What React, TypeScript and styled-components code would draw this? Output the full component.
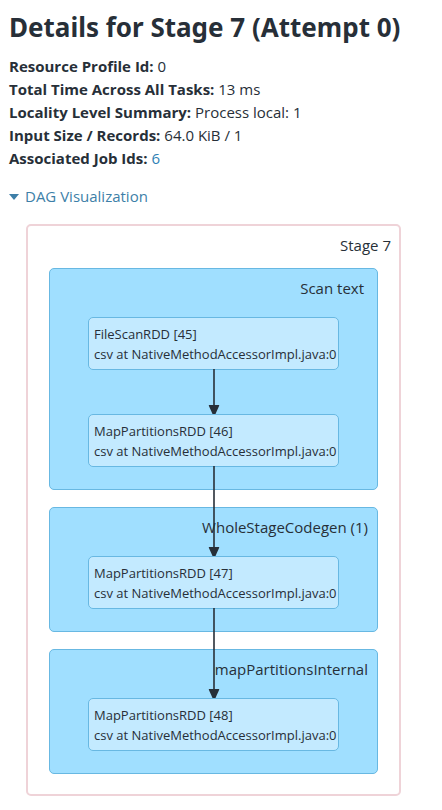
import React, { useState } from "react";
import styled, { createGlobalStyle } from "styled-components";

const GlobalStyle = createGlobalStyle`
  * { box-sizing: border-box; }
  body {
    margin: 0;
    background: #ffffff;
    color: #272f38;
    font-family: "Open Sans", "Noto Sans", sans-serif;
    font-size: 15px;
    line-height: 23px;
    font-weight: 400;
  }
`;

const Page = styled.main`
  padding: 8px 9px 14px;
`;

const Title = styled.h1`
  margin: 0 0 9px;
  font-family: "Noto Sans", "Open Sans", sans-serif;
  font-size: 26px;
  line-height: 38px;
  font-weight: 700;
  white-space: nowrap;
`;

const Summary = styled.ul`
  margin: 0 0 15px;
  padding: 0;
  list-style: none;
`;

const Term = styled.strong`
  font-weight: 700;
`;

const JobLink = styled.a`
  color: #2f80b4;
  text-decoration: none;
`;

const Toggle = styled.button`
  display: flex;
  align-items: center;
  gap: 6px;
  padding: 0;
  border: 0;
  background: none;
  color: #3d7fa8;
  font: inherit;
  cursor: pointer;
`;

const Caret = styled.span<{ $open: boolean }>`
  border: 5px solid transparent;
  border-top: 6px solid currentColor;
  border-bottom: 0;
  transform: ${(p) => (p.$open ? "none" : "rotate(-90deg)")};
`;

const Stage = styled.section`
  margin: 16px 32px 0 17px;
  padding: 0 21px 20px;
  border: 2px solid #efd3d8;
  border-radius: 5px;
`;

const StageLabel = styled.h2`
  margin: 0 -13px 0 0;
  padding: 8px 0 11px;
  font-size: 15px;
  line-height: 23px;
  font-weight: inherit;
  text-align: right;
`;

const Clusters = styled.div`
  display: flex;
  flex-direction: column;
  gap: 17px;
`;

const Cluster = styled.section`
  padding: 0 38px 22px;
  border: 1px solid #68b8e2;
  border-radius: 5px;
  background: #a0dfff;
`;

const ClusterLabel = styled.h3<{ $inset: boolean }>`
  display: flex;
  justify-content: flex-end;
  height: 48px;
  margin: 0 ${(p) => (p.$inset ? -25 : -29)}px 0 0;
  padding-top: 8px;
  font-size: 15px;
  line-height: 23px;
  font-weight: inherit;
  white-space: nowrap;
`;

const Nodes = styled.div`
  display: flex;
  flex-direction: column;
  gap: 44px;
`;

const Node = styled.div`
  position: relative;
  padding: 6px 5px 5px;
  border: 1px solid #68b8e2;
  border-radius: 5px;
  background: #c3eaff;
  font-size: 13px;
  line-height: 20px;
  white-space: nowrap;
`;

const ArrowBox = styled.svg`
  position: absolute;
  z-index: 1;
  top: 100%;
  left: 50%;
  transform: translateX(-50%);
  display: block;
`;

function Arrow({ length }: { length: number }) {
  return (
    <ArrowBox width="11" height={length} viewBox={`0 0 11 ${length}`} aria-hidden="true">
      <path d={`M5.5 0V${length - 8}`} stroke="#272f38" strokeWidth="1.6" />
      <path d={`M0 ${length - 9}H11L7 ${length}H4Z`} fill="#272f38" />
    </ArrowBox>
  );
}

const summary = [
  { label: "Resource Profile Id:", value: "0" },
  { label: "Total Time Across All Tasks:", value: "13 ms" },
  { label: "Locality Level Summary:", value: "Process local: 1" },
  { label: "Input Size / Records:", value: "64.0 KiB / 1" },
];

const CALL_SITE = "csv at NativeMethodAccessorImpl.java:0";

const clusters = [
  {
    label: "Scan text",
    inset: true,
    nodes: [
      { name: "FileScanRDD [45]", arrow: 45 },
      { name: "MapPartitionsRDD [46]", arrow: 90 },
    ],
  },
  { label: "WholeStageCodegen (1)", inset: false, nodes: [{ name: "MapPartitionsRDD [47]", arrow: 90 }] },
  { label: "mapPartitionsInternal", inset: false, nodes: [{ name: "MapPartitionsRDD [48]", arrow: 0 }] },
];

export default function App() {
  const [open, setOpen] = useState(true);
  return (
    <Page>
      <GlobalStyle />
      <Title>Details for Stage 7 (Attempt 0)</Title>
      <Summary>
        {summary.map((s) => (
          <li key={s.label}>
            <Term>{s.label}</Term> {s.value}
          </li>
        ))}
        <li>
          <Term>Associated Job Ids:</Term> <JobLink href="#job-6">6</JobLink>
        </li>
      </Summary>
      <Toggle type="button" aria-expanded={open} onClick={() => setOpen(!open)}>
        <Caret $open={open} />
        DAG Visualization
      </Toggle>
      {open && (
        <Stage>
          <StageLabel>Stage 7</StageLabel>
          <Clusters>
            {clusters.map((c) => (
              <Cluster key={c.label}>
                <ClusterLabel $inset={c.inset}>{c.label}</ClusterLabel>
                <Nodes>
                  {c.nodes.map((n) => (
                    <Node key={n.name}>
                      <div>{n.name}</div>
                      <div>{CALL_SITE}</div>
                      {n.arrow > 0 && <Arrow length={n.arrow} />}
                    </Node>
                  ))}
                </Nodes>
              </Cluster>
            ))}
          </Clusters>
        </Stage>
      )}
    </Page>
  );
}
